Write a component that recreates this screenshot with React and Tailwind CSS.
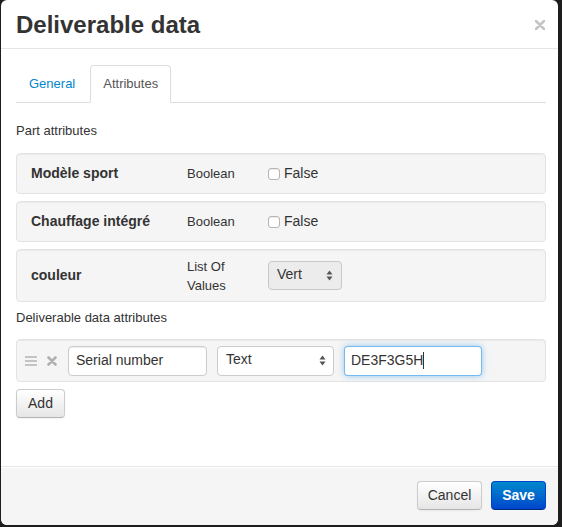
import React from "react";

const font = { fontFamily: '"Liberation Sans", Arial, sans-serif' };

function Checkbox() {
  return (
    <span className="inline-block w-[12px] h-[12px] rounded-[3px] border border-[#b5b5b5] bg-white mr-[4px] shadow-[inset_0_1px_1px_rgba(0,0,0,0.08)]" />
  );
}

function Arrows() {
  return (
    <svg width="7" height="11" viewBox="0 0 7 11" className="shrink-0">
      <path d="M3.5 0.5 L6.5 4.5 L0.5 4.5 Z" fill="#555" />
      <path d="M3.5 10.5 L6.5 6.5 L0.5 6.5 Z" fill="#555" />
    </svg>
  );
}

function Well({ label, type, children, tall }) {
  return (
    <div
      className={`flex items-center px-[14px] bg-[#f5f5f5] border border-[#e3e3e3] rounded-[4px] shadow-[inset_0_1px_1px_rgba(0,0,0,0.05)] ${
        tall ? "h-[53px]" : "h-[41px]"
      }`}
    >
      <div className="w-[156px] text-[14px] font-bold text-[#333]">{label}</div>
      <div className="w-[81px] pr-[8px] text-[13px] leading-[19px] text-[#333]">{type}</div>
      <div className="flex items-center">{children}</div>
    </div>
  );
}

export default function App() {
  return (
    <div className="w-[562px] h-[527px] bg-[#1d1d1d] overflow-hidden" style={font}>
      <div className="ml-[1px] w-[557px] h-[525px] bg-white rounded-[6px] overflow-hidden flex flex-col text-[#333]">
        {/* header */}
        <div className="flex items-center justify-between h-[49px] pt-[2px] pl-[15px] pr-[13px] border-b border-[#e5e5e5]">
          <h3 className="text-[24px] leading-[30px] font-bold text-[#333]">Deliverable data</h3>
          <svg width="10" height="10" viewBox="0 0 10 10">
            <path d="M1 1 L9 9 M9 1 L1 9" stroke="#c4c4c4" strokeWidth="2.6" strokeLinecap="round" />
          </svg>
        </div>

        {/* body */}
        <div className="flex-1 pt-4 pl-[15px] pr-[12px]">
          <div className="flex border-b border-[#ddd]">
            <div className="-mb-px mr-[2px] px-[12px] py-[8px] leading-5 text-[13px] text-[#0088cc] border border-transparent rounded-t-[4px]">
              General
            </div>
            <div className="-mb-px px-[12px] py-[8px] leading-5 text-[13px] text-[#555] bg-white border border-[#ddd] border-b-white rounded-t-[4px]">
              Attributes
            </div>
          </div>

          <div className="mt-[18px] text-[13px] leading-5">Part attributes</div>

          <div className="mt-3 flex flex-col gap-[7px]">
            <Well label="Modèle sport" type="Boolean">
              <Checkbox />
              <span className="text-[14px]">False</span>
            </Well>
            <Well label="Chauffage intégré" type="Boolean">
              <Checkbox />
              <span className="text-[14px]">False</span>
            </Well>
            <Well label="couleur" type="List Of Values" tall>
              <div className="flex items-center justify-between w-[74px] h-[29px] pl-[8px] pr-[8px] bg-[#ececec] border border-[#c8c8c8] rounded-[4px] text-[14px]">
                <span className="-mt-[2px]">Vert</span>
                <Arrows />
              </div>
            </Well>
          </div>

          <div className="mt-[6px] text-[13px] leading-5">Deliverable data attributes</div>

          <div className="mt-[11px] h-[43px] flex items-center pl-[8px] bg-[#f5f5f5] border border-[#e3e3e3] rounded-[4px] shadow-[inset_0_1px_1px_rgba(0,0,0,0.05)]">
            <svg width="12" height="10" viewBox="0 0 12 10" className="shrink-0">
              <rect x="0" y="0" width="12" height="2" fill="#c4c4c4" />
              <rect x="0" y="4" width="12" height="2" fill="#c4c4c4" />
              <rect x="0" y="8" width="12" height="2" fill="#c4c4c4" />
            </svg>
            <svg width="10" height="10" viewBox="0 0 10 10" className="ml-[10px] shrink-0">
              <path d="M1.5 1.5 L8.5 8.5 M8.5 1.5 L1.5 8.5" stroke="#b0b0b0" strokeWidth="2.6" strokeLinecap="round" />
            </svg>
            <div className="ml-[11px] w-[139px] h-[30px] flex items-center pl-[7px] bg-white border border-[#ccc] rounded-[4px] text-[14px] shadow-[inset_0_1px_1px_rgba(0,0,0,0.075)]">
              Serial number
            </div>
            <div className="ml-[10px] w-[117px] h-[30px] flex items-center justify-between pl-[8px] pr-[7px] bg-white border border-[#ccc] rounded-[4px] text-[14px]">
              <span className="-mt-[3px]">Text</span>
              <Arrows />
            </div>
            <div className="ml-[10px] w-[138px] h-[30px] flex items-center pl-[6px] bg-white border border-[rgba(82,168,236,0.8)] rounded-[4px] text-[14px] shadow-[0_0_6px_rgba(82,168,236,0.6)]">
              DE3F3G5H
              <span className="inline-block w-px h-[17px] bg-[#333]" />
            </div>
          </div>

          <button className="mt-[7px] w-[49px] h-[29px] text-[14px] text-[#333] bg-gradient-to-b from-white to-[#e6e6e6] border border-[#ccc] border-b-[#b3b3b3] rounded-[4px] shadow-[inset_0_1px_0_rgba(255,255,255,0.2),0_1px_2px_rgba(0,0,0,0.05)]">
            Add
          </button>
        </div>

        {/* footer */}
        <div className="h-[59px] flex items-start justify-end gap-[9px] pt-[14px] pr-[12px] bg-[#f5f5f5] border-t border-[#e5e5e5] shadow-[inset_0_1px_0_white]">
          <button className="w-[65px] h-[29px] text-[14px] text-[#333] bg-gradient-to-b from-white to-[#e6e6e6] border border-[#ccc] border-b-[#b3b3b3] rounded-[4px] shadow-[0_1px_2px_rgba(0,0,0,0.05)]">
            Cancel
          </button>
          <button className="w-[55px] h-[29px] text-[14px] font-bold text-white bg-gradient-to-b from-[#0088cc] to-[#0044cc] border border-[#0044cc] border-b-[#002a80] rounded-[4px]">
            Save
          </button>
        </div>
      </div>
    </div>
  );
}
